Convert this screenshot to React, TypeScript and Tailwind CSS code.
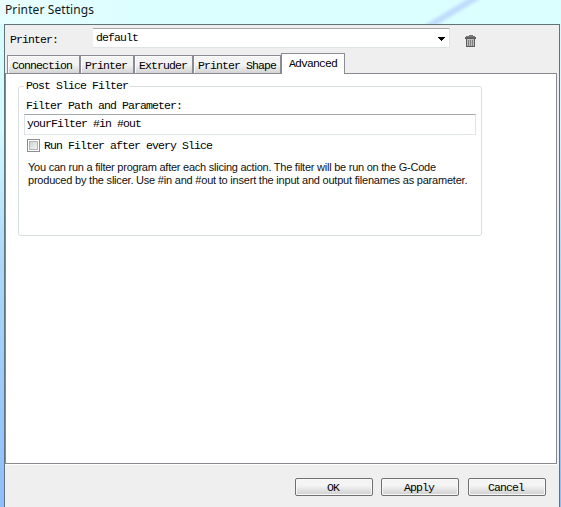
import React from "react";

const mono =
  "font-['Liberation_Mono',monospace] text-[11.5px] tracking-[-0.9px] leading-[14px] whitespace-pre text-black";

const tabs = [
  { label: "Connection", width: "w-[73px]" },
  { label: "Printer", width: "w-[54px]" },
  { label: "Extruder", width: "w-[59px]" },
  { label: "Printer Shape", width: "w-[88px]" },
];

const buttons = [
  { label: "OK", margin: "" },
  { label: "Apply", margin: "ml-2" },
  { label: "Cancel", margin: "ml-[9px]" },
];

function TrashIcon() {
  return (
    <svg className="ml-[15px] mt-[10px] block" width="12" height="13" viewBox="0 0 12 13" shapeRendering="crispEdges">
      <path d="M4 0h4v1H4z" fill="#777" />
      <path d="M1 1h9v1H1z" fill="#777" />
      <path d="M0 2h11v1H0z" fill="#666" />
      <path d="M1 4h9v8H1z" fill="#bcbcbc" />
      <path d="M0 3h11v1H0zM1 4h1v8H1zM9 4h1v8H9zM2 11h7v1H2z" fill="#5c5c5c" />
      <path d="M3 5h1v6H3zM5 5h1v6H5zM7 5h1v6H7z" fill="#808080" />
    </svg>
  );
}

function TabStrip() {
  return (
    <div className="flex h-[20px] items-end pl-[2px]">
      {tabs.map((tab) => (
        <div
          key={tab.label}
          className={`${tab.width} h-[18px] shrink-0 border-l border-t border-r border-[#898c95] bg-gradient-to-b from-[#f3f3f3] from-50% to-[#d4d4d4] shadow-[inset_1px_1px_0_#fcfcfc] pl-[4px] pt-[3px]`}
        >
          <div className={mono}>{tab.label}</div>
        </div>
      ))}
      <div className="relative z-10 -mb-px h-[21px] w-[64px] border border-b-0 border-[#898c95] bg-white pl-[7px] pt-[3px]">
        <div className={mono}>Advanced</div>
      </div>
    </div>
  );
}

export default function App() {
  return (
    <div className="flex h-[507px] w-[561px] flex-col overflow-hidden bg-[linear-gradient(180deg,#d9feff_0%,#d5faff_25%,#add9fb_50%,#8fbdfb_100%)]">
      <header className="flex h-[24px] items-start justify-between bg-[#dbfeff]">
        <div className="h-[24px] w-[140px] bg-gradient-to-r from-[#e9ffff] to-[#dbfeff] pl-[5px] pt-px">
          <div className="whitespace-nowrap font-['Noto_Sans',sans-serif] text-[12px] leading-[18px] tracking-[0.1px] text-[#101820]">Printer Settings</div>
        </div>
        <svg className="mr-[60px] block" width="96" height="24" viewBox="0 0 96 24">
          <defs>
            <filter id="soft"><feGaussianBlur stdDeviation="1.5" /></filter>
          </defs>
          <path d="M18 26L66-3H78L30 26Z" fill="#c0dcfb" filter="url(#soft)" />
        </svg>
      </header>

      <main className="ml-[4px] flex h-[483px] w-[556px] flex-col border-l border-r border-t border-[#5f7478] bg-[#efefef]">
        <div className="flex h-[28px]">
          <div className="w-[88px] pl-[5px] pt-[8px]"><div className={mono}>Printer:</div></div>
          <div className="mt-[3px] flex h-[20px] w-[357px] justify-between border border-l-0 border-t-[#a8a8a8] border-r-[#dfe3e5] border-b-[#dfe5e5] bg-white pl-[3px] pr-[4px] pt-[2px]">
            <div className={mono}>default</div>
            <svg className="mt-[6px] block" width="7" height="4" viewBox="0 0 7 4" shapeRendering="crispEdges">
              <path d="M0 0h7v1H6v1H5v1H4v1H3V3H2V2H1V1H0z" fill="#000" />
            </svg>
          </div>
          <TrashIcon />
        </div>

        <TabStrip />

        <section className="h-[391px] w-[552px] border border-[#888a90] bg-white pl-[12px] pt-[12px] shadow-[0_1px_0_#fff]">
          <fieldset className="h-[150px] w-[464px] min-w-0 rounded-[3px] border border-[#d8dede]">
            <div className="-mt-[8px] ml-[5px] w-[106px] bg-white pl-[2px]"><div className={mono}>Post Slice Filter</div></div>
            <div className="ml-[7px] mt-[6px]"><div className={mono}>Filter Path and Parameter:</div></div>
            <div className="ml-[5px] mt-px h-[21px] w-[452px] border border-t-[#a6a7aa] border-r-[#dde2e6] border-b-[#e2e8e8] border-l-[#dde2e6] pl-[2px] pt-[2px]">
              <div className={mono}>yourFilter #in #out</div>
            </div>
            <div className="ml-[8px] mt-[4px] flex h-[14px]">
              <span className="h-[13px] w-[13px] border border-[#8b8d8f] bg-white p-px">
                <span className="block h-[9px] w-[9px] border border-[#b0b4b8] bg-gradient-to-br from-[#cfd2d5] to-[#f4f4f4]" />
              </span>
              <div className={`${mono} ml-[4px]`}>Run Filter after every Slice</div>
            </div>
            <p className="ml-[9px] mt-[8px] whitespace-nowrap font-['Liberation_Sans',Arial,sans-serif] text-[11px] leading-[13px] tracking-[-0.21px] text-[#111]">
              <span className="tracking-[-0.24px]">You can run a filter program after each slicing action. The filter will be run on the G-Code</span>
              <br />
              produced by the slicer. Use #in and #out to insert the input and output filenames as parameter.
            </p>
          </fieldset>
        </section>

        <footer className="flex pl-[290px] pt-[14px]">
          {buttons.map((button) => (
            <div
              key={button.label}
              className={`${button.margin} flex h-[18px] w-[78px] shrink-0 justify-center rounded-[2px] border border-[#707070] bg-gradient-to-b from-[#f4f4f4] from-40% to-[#cfcfcf] pr-[2px] pt-[2px] shadow-[inset_0_0_0_1px_#f8f8f8]`}
            >
              <div className={mono}>{button.label}</div>
            </div>
          ))}
        </footer>
      </main>
    </div>
  );
}
